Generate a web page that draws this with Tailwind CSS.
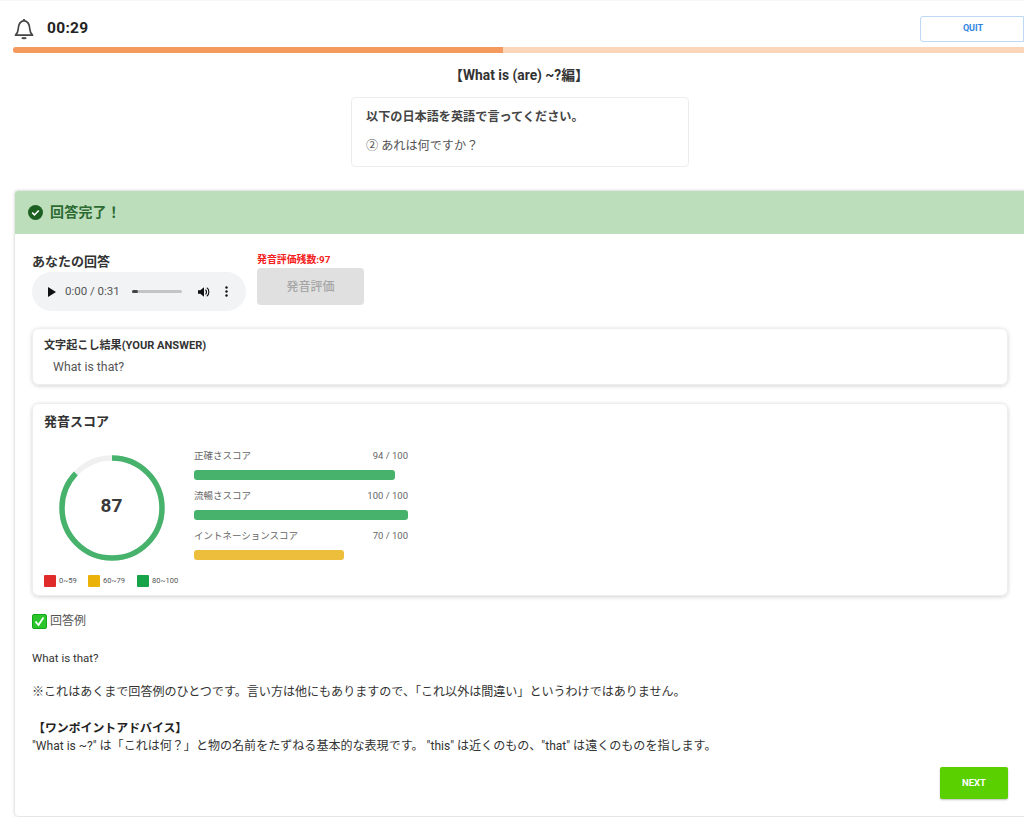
<!DOCTYPE html>
<html lang="ja">
<head>
<meta charset="utf-8">
<title>Quiz</title>
<script src="https://cdn.jsdelivr.net/npm/@tailwindcss/browser@4"></script>
</head>
<body class="bg-white overflow-hidden font-['Roboto','Noto_Sans_CJK_JP',sans-serif] text-[#333]">
<div class="w-[1024px] h-[817px] overflow-hidden">

    <!-- Top bar -->
    <div class="h-[47px] pl-[14px] flex items-center justify-between border-t border-[#f7f7f7]">
        <div class="flex items-center gap-[13px] mt-[10px]">
            <svg class="w-[20px] h-[22px]" viewBox="0 0 20 22" fill="none" stroke="#444" stroke-width="1.7" stroke-linejoin="round">
                <path d="M1.5 17.2h17c-1.800-1.800-2.600-3.600-2.700-6.200-.2-4.200-1.500-7.700-5.800-8.400-4.300.7-5.600 4.200-5.800 8.400-.1 2.600-.9 4.400-2.700 6.200z"/>
                <path d="M10 1v1.600"/>
                <path d="M8 19.600c.6 1 3.400 1 4 0" stroke-width="2"/>
            </svg>
            <span class="text-[15.500px] font-bold text-[#222] tracking-[0.3px]">00:29</span>
        </div>
        <button class="w-[104px] h-[26px] mt-[11px] bg-white border border-[#bcd9f7] rounded-l-[3px] text-[#2f86e0] text-[9px] font-bold flex items-center justify-center pl-[2px] relative top-[-1px]">QUIT</button>
    </div>

    <!-- Progress -->
    <div class="ml-[13px] h-[6px] bg-[#fbd6bb] rounded-l-full overflow-hidden">
        <div class="w-[490px] h-full bg-[#f59a5e]"></div>
    </div>

    <!-- Question -->
    <h1 class="mt-[13px] pl-[14px] text-center text-[13.800px] leading-[18px] font-bold text-[#333]">【What is (are) ~?編】</h1>
    <div class="mt-[13px] w-[338px] h-[70px] ml-[351px] border border-[#ececec] rounded-[4px] px-[14px] pt-[10px]">
        <p class="text-[12.150px] leading-[18px] font-bold text-[#444]">以下の日本語を英語で言ってください。</p>
        <p class="mt-[11px] text-[12.150px] leading-[18px] text-[#555]">② あれは何ですか？</p>
    </div>

    <!-- Result card -->
    <div class="mt-[23px] ml-[14px] w-[1030px] h-[627px] border border-[#e6e6e6] rounded-[4px] shadow-[0_0_3px_rgba(0,0,0,0.12)] overflow-hidden">
        <div class="h-[43px] bg-[#bcdebb] flex items-center pl-[13px] gap-[7px]">
            <svg class="w-[15px] h-[15px]" viewBox="0 0 16 16">
                <circle cx="8" cy="8" r="8" fill="#1c6022"/>
                <path d="M4.500 8.200l2.400 2.400 4.600-4.800" fill="none" stroke="#fff" stroke-width="1.700"/>
            </svg>
            <span class="text-[14px] font-bold text-[#2e6b33] tracking-[0.2px]">回答完了！</span>
        </div>

        <div class="pl-[17px] w-[993px]">
            <!-- Answer row -->
            <div class="flex gap-[11px] mt-[18px]">
                <div class="w-[214px]">
                    <p class="text-[13px] leading-[19px] font-bold text-[#333]">あなたの回答</p>
                    <div class="mt-[1px] h-[39px] rounded-full bg-[#f1f3f4] flex items-center pl-[15px] text-[#444]">
                        <svg class="w-[9px] h-[10px]" viewBox="0 0 9 10"><path d="M1 0l8 5-8 5z" fill="#111"/></svg>
                        <span class="ml-[9px] text-[11.500px] text-[#555] whitespace-nowrap">0:00 / 0:31</span>
                        <div class="ml-[12px] w-[50px] h-[3px] rounded bg-[#c4c4c6]">
                            <div class="w-[6px] h-full rounded bg-[#444]"></div>
                        </div>
                        <svg class="ml-[16px] w-[12px] h-[12px]" viewBox="0 0 13 12">
                            <path d="M0 4h2.500L6.500 .8v10.400L2.500 8H0z" fill="#111"/>
                            <path d="M8 3.500c1.600.8 1.600 4.200 0 5" fill="none" stroke="#111" stroke-width="1.300"/>
                            <path d="M9.500 1.500c3 1.500 3 7.500 0 9" fill="none" stroke="#111" stroke-width="1.200"/>
                        </svg>
                        <svg class="ml-[15px] w-[3px] h-[11px]" viewBox="0 0 3 11" fill="#111">
                            <circle cx="1.500" cy="1.500" r="1.200"/><circle cx="1.500" cy="5.500" r="1.200"/><circle cx="1.500" cy="9.500" r="1.200"/>
                        </svg>
                    </div>
                </div>
                <div>
                    <p class="text-[9.900px] leading-[13px] font-bold text-[#f52020] mt-[1px] whitespace-nowrap">発音評価残数:97</p>
                    <button class="mt-[2px] w-[107px] h-[37px] bg-[#e0e0e0] rounded-[4px] text-[12px] font-medium text-[#a6a6a6]">発音評価</button>
                </div>
            </div>

            <!-- Transcription -->
            <div class="mt-[17px] h-[57px] border border-[#eeeeee] rounded-[7px] shadow-[0_1px_4px_rgba(0,0,0,0.18)] pl-[11px] pt-[9px]">
                <p class="text-[11.100px] leading-[16px] font-bold text-[#333]">文字起こし結果(YOUR ANSWER)</p>
                <p class="mt-[5px] ml-[9px] text-[12.300px] leading-[17px] text-[#555]">What is that?</p>
            </div>

            <!-- Score -->
            <div class="mt-[18px] h-[193px] border border-[#eeeeee] rounded-[7px] shadow-[0_1px_4px_rgba(0,0,0,0.18)] pl-[11px] pt-[8px]">
                <p class="text-[13px] leading-[19px] font-bold text-[#333]">発音スコア</p>
                <div class="flex mt-[18px]">
                    <div class="w-[150px] shrink-0">
                        <div class="relative w-[106px] h-[106px] ml-[15px] mt-[6px] flex items-center justify-center">
                            <svg class="absolute inset-0 w-full h-full -rotate-90" viewBox="0 0 106 106">
                                <circle cx="53" cy="53" r="50" fill="none" stroke="#f0f0f0" stroke-width="5.500"/>
                                <circle cx="53" cy="53" r="50" fill="none" stroke="#47b26b" stroke-width="5.500" stroke-dasharray="273.300 314.200"/>
                            </svg>
                            <span class="text-[19px] font-bold text-[#3a3a3a] pb-[4px] pr-[1px]">87</span>
                        </div>
                        <div class="flex items-center mt-[14px] text-[7.500px] text-[#555]">
                            <span class="w-[12px] h-[12px] bg-[#e02b2b] rounded-[1px]"></span><span class="ml-[3px] w-[29px]">0~59</span>
                            <span class="w-[12px] h-[12px] bg-[#eab208] rounded-[1px]"></span><span class="ml-[3px] w-[34px]">60~79</span>
                            <span class="w-[12px] h-[12px] bg-[#16a34a] rounded-[1px]"></span><span class="ml-[3px] whitespace-nowrap">80~100</span>
                        </div>
                    </div>
                    <div class="w-[214px]">
                        <div class="h-[40px]">
                            <div class="flex justify-between text-[9.500px] leading-[14px] text-[#666]"><span>正確さスコア</span><span>94 / 100</span></div>
                            <div class="mt-[7px] h-[10px]"><div class="w-[94%] h-full rounded-[3px] bg-[#47b26b]"></div></div>
                        </div>
                        <div class="h-[40px]">
                            <div class="flex justify-between text-[9.500px] leading-[14px] text-[#666]"><span>流暢さスコア</span><span>100 / 100</span></div>
                            <div class="mt-[7px] h-[10px]"><div class="w-full h-full rounded-[3px] bg-[#47b26b]"></div></div>
                        </div>
                        <div class="h-[40px]">
                            <div class="flex justify-between text-[9.500px] leading-[14px] text-[#666]"><span>イントネーションスコア</span><span>70 / 100</span></div>
                            <div class="mt-[7px] h-[10px]"><div class="w-[70%] h-full rounded-[3px] bg-[#edbd3c]"></div></div>
                        </div>
                    </div>
                </div>
            </div>

            <!-- Sample answer -->
            <div class="mt-[16px] flex items-center gap-[3px] text-[12px] leading-[18px] text-[#555]">
                <span class="w-[15px] h-[15px] rounded-[2px] bg-[#2cc52c] border border-[#10a91a] flex items-center justify-center">
                    <svg class="w-[11px] h-[11px]" viewBox="0 0 11 11"><path d="M1.500 5.500l3 3.500 5-7.500" fill="none" stroke="#fff" stroke-width="1.800"/></svg>
                </span>
                回答例
            </div>
            <p class="mt-[20px] text-[11.500px] leading-[16px] text-[#333]">What is that?</p>
            <p class="mt-[18px] text-[12.050px] leading-[17px] text-[#333] whitespace-nowrap">※これはあくまで回答例のひとつです。言い方は他にもありますので、「これ以外は間違い」というわけではありません。</p>
            <p class="mt-[19px] ml-[1px] text-[11.900px] leading-[16px] font-bold text-[#222]">【ワンポイントアドバイス】</p>
            <p class="mt-[2px] text-[12.050px] leading-[17px] text-[#333] whitespace-nowrap">"What is ~?" は「これは何？」と物の名前をたずねる基本的な表現です。 "this" は近くのもの、"that" は遠くのものを指します。</p>

            <div class="flex justify-end mt-[12px]">
                <button class="w-[68px] h-[32px] bg-[#5ad000] rounded-[2px] shadow-[0_1px_2px_rgba(0,0,0,0.25)] text-white text-[9.500px] font-bold">NEXT</button>
            </div>
        </div>
    </div>
</div>
</body>
</html>
